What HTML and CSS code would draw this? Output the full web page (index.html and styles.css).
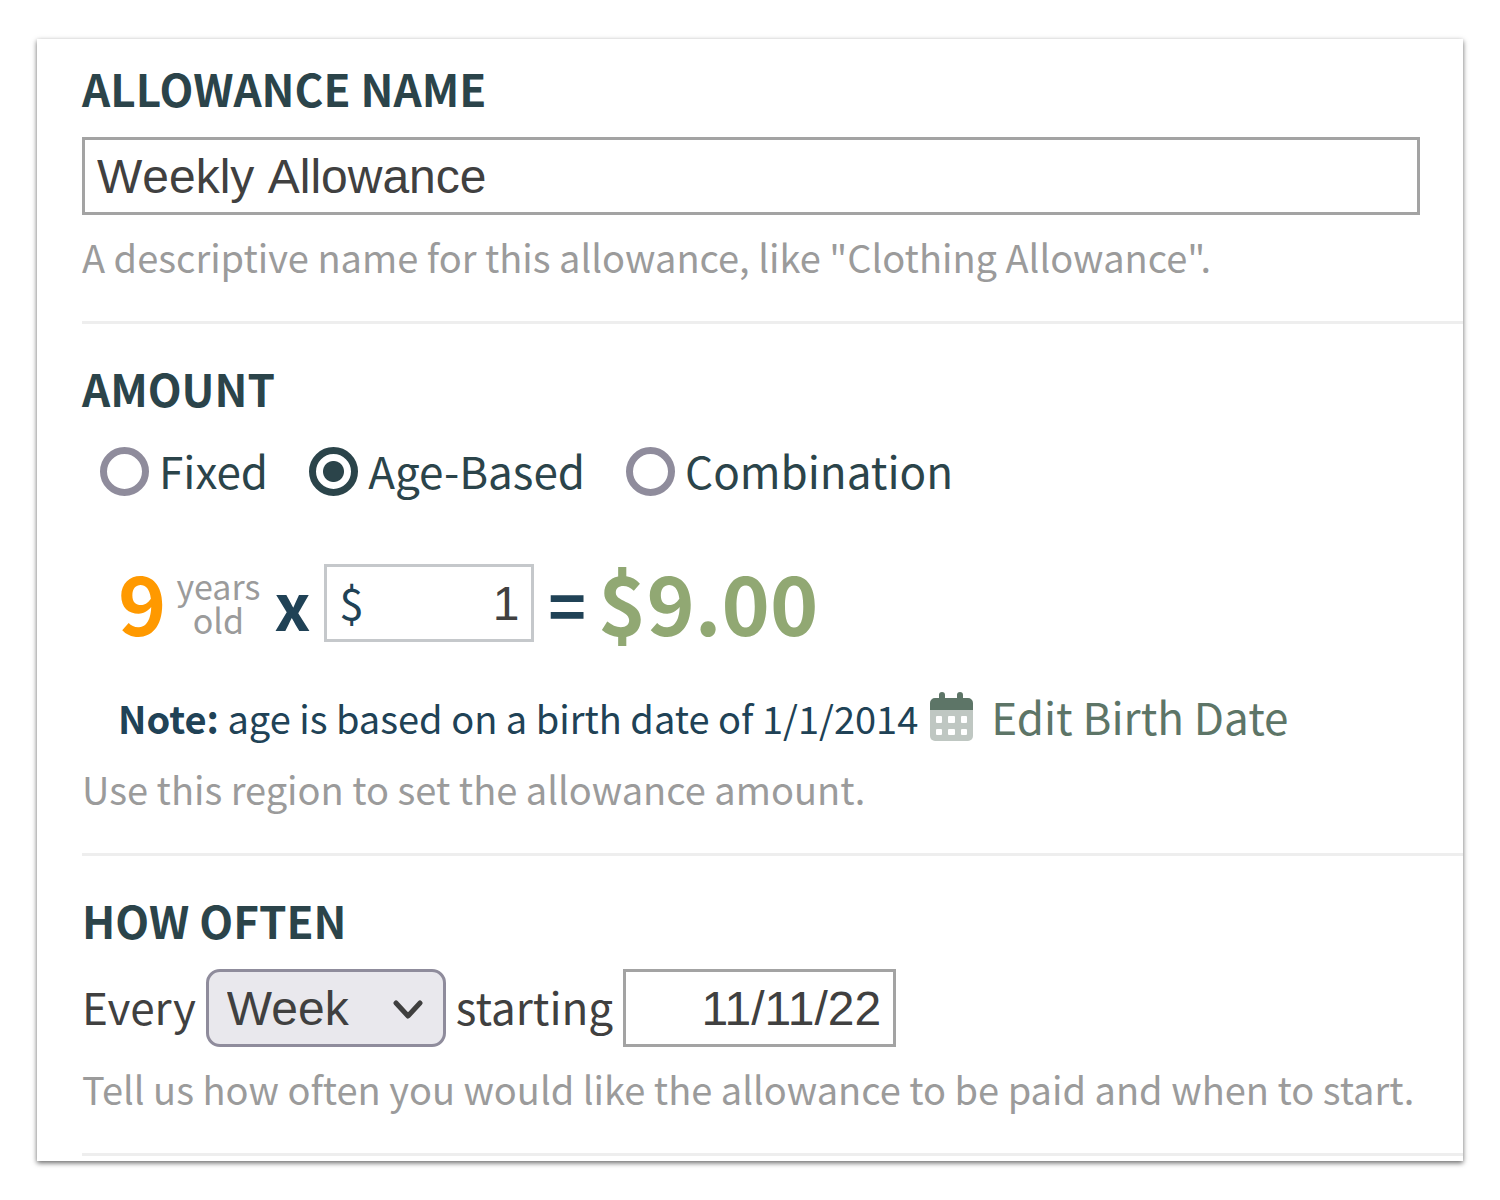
FILE: index.html
```
<!DOCTYPE html>
<html lang="en">
<head>
    <meta charset="UTF-8">
    <meta name="viewport" content="width=device-width, initial-scale=1.0">
    <title>Edit Allowance</title>
    <link rel="stylesheet" href="styles.css">
</head>
<body>
<form class="sheet">
    <section class="region">
        <h2><label for="allowanceName">ALLOWANCE NAME</label></h2>
        <input class="box name-box" type="text" id="allowanceName" value="Weekly Allowance">
        <p class="hint">A descriptive name for this allowance, like "Clothing Allowance".</p>
    </section>

    <section class="region">
        <h2>AMOUNT</h2>
        <div class="radio-row">
            <label class="radio"><input type="radio" name="amountType" value="fixed">Fixed</label>
            <label class="radio"><input type="radio" name="amountType" value="age" checked>Age-Based</label>
            <label class="radio"><input type="radio" name="amountType" value="combo">Combination</label>
        </div>
        <div class="formula">
            <span class="age">9</span>
            <span class="years">years<br>old</span>
            <span class="operator">x</span>
            <div class="money">
                <label for="perYear">$</label>
                <input type="text" id="perYear" value="1">
            </div>
            <span class="operator">=</span>
            <span class="total">$9.00</span>
        </div>
        <div class="note">
            <span class="note-text"><b>Note:</b> age is based on a birth date of 1/1/2014</span>
            <a href="#">
                <svg class="calendar" viewBox="0 0 43 49" aria-hidden="true">
                    <path fill="#bfc7c2" d="M0 18h43v26a5 5 0 0 1-5 5H5a5 5 0 0 1-5-5z"/>
                    <path fill="#5d7567" d="M0 18v-7a5 5 0 0 1 5-5h4V3a3 3 0 0 1 6 0v3h12V3a3 3 0 0 1 6 0v3h5a5 5 0 0 1 5 5v7z"/>
                    <g fill="#fff">
                        <rect x="6" y="24" width="6" height="7" rx="1"/>
                        <rect x="18" y="24" width="7" height="7" rx="1"/>
                        <rect x="31" y="24" width="6" height="7" rx="1"/>
                        <rect x="6" y="37" width="6" height="6" rx="1"/>
                        <rect x="18" y="37" width="7" height="6" rx="1"/>
                        <rect x="31" y="37" width="6" height="6" rx="1"/>
                    </g>
                </svg>
                Edit Birth Date
            </a>
        </div>
        <p class="hint">Use this region to set the allowance amount.</p>
    </section>

    <section class="region">
        <h2>HOW OFTEN</h2>
        <div class="schedule">
            <label for="period">Every</label>
            <div class="select-wrap">
                <select id="period">
                    <option>Day</option>
                    <option selected>Week</option>
                    <option>Month</option>
                </select>
                <svg class="chevron" viewBox="0 0 30 20" aria-hidden="true">
                    <path d="M3 3l12 13L27 3" fill="none" stroke="#3f3f3f" stroke-width="5" stroke-linecap="round" stroke-linejoin="round"/>
                </svg>
            </div>
            <label for="startDate">starting</label>
            <input class="box date-box" type="text" id="startDate" value="11/11/22">
        </div>
        <p class="hint">Tell us how often you would like the allowance to be paid and when to start.</p>
    </section>
</form>
</body>
</html>
```
FILE: styles.css
```
:root {
    --heading-color: #2b444a;
    --navy: #204256;
    --text-color: #404040;
    --hint-color: #9b9b9b;
    --link-color: #5d7567;
    --purple-gray: #8f8c9c;
}

* {
    box-sizing: border-box;
}

body {
    margin: 0;
    padding: 39px 37px;
    background: #fff;
    color: var(--text-color);
    font-family: "Noto Sans CJK SC", sans-serif;
    font-size: 44px;
    line-height: 52px;
}

.sheet {
    padding: 0 0 5px 45px;
    background: #fff;
    box-shadow: 0 2px 5px rgba(0, 0, 0, 0.6);
}

.region {
    padding: 38px 0;
    border-bottom: 3px solid #eee;
}

.region:first-child {
    padding-top: 23px;
}

h2 {
    margin: 0;
    font-size: 44px;
    color: var(--heading-color);
}

.hint {
    margin: 16px 0 0;
    font-size: 38px;
    color: var(--hint-color);
}

input, select {
    font-family: "Liberation Sans", Arial, sans-serif;
    font-size: 48px;
    color: var(--text-color);
}

.box {
    height: 78px;
    padding: 0 12px;
    border: 3px solid #a3a3a3;
    background: #fff;
}

.name-box {
    display: block;
    width: calc(100% - 43px);
    margin-top: 23px;
    font-kerning: none;
}

.radio-row {
    display: flex;
    gap: 41px;
    padding: 33px 18px 0;
    line-height: 46px;
    color: var(--heading-color);
}

.radio {
    display: flex;
    gap: 10px;
}

.radio input {
    appearance: none;
    width: 49px;
    height: 49px;
    margin: 0;
    border: 7px solid var(--purple-gray);
    border-radius: 50%;
}

.radio input:checked {
    border-color: var(--heading-color);
    background: radial-gradient(circle, var(--heading-color) 10px, #fff 11px);
}

.formula {
    display: flex;
    align-items: center;
    margin-top: 63px;
    padding-left: 36px;
    color: var(--navy);
    font-weight: bold;
}

.age, .total {
    padding-bottom: 4px;
    font-size: 82px;
    line-height: 84px;
}

.age {
    color: #ff9900;
}

.years {
    margin: 0 14px 0 10px;
    font-size: 34px;
    font-weight: normal;
    line-height: 34px;
    text-align: center;
    color: var(--hint-color);
}

.operator {
    font-size: 64px;
}

.money {
    display: flex;
    align-items: center;
    width: 210px;
    height: 78px;
    margin: 0 14px;
    padding: 0 12px;
    border: 3px solid #c5c8cb;
    font-weight: normal;
}

.money label {
    padding-bottom: 4px;
}

.money input {
    width: 100%;
    padding: 0;
    border: 0;
    background: none;
    text-align: right;
}

.total {
    margin-left: 12px;
    color: #91a873;
}

.note {
    display: flex;
    align-items: center;
    gap: 12px;
    margin-top: 43px;
    padding: 0 0 5px 36px;
    color: var(--navy);
}

.note-text {
    padding-top: 4px;
    font-size: 38px;
    line-height: 48px;
}

.note a {
    display: flex;
    align-items: center;
    gap: 18px;
    color: var(--link-color);
    text-decoration: none;
}

.calendar {
    width: 43px;
    height: 49px;
}

.schedule {
    display: flex;
    align-items: center;
    gap: 10px;
    margin-top: 23px;
}

.schedule label {
    padding-bottom: 4px;
}

.select-wrap {
    position: relative;
}

.select-wrap select {
    appearance: none;
    display: block;
    width: 240px;
    height: 78px;
    padding: 0 18px;
    border: 3px solid var(--purple-gray);
    border-radius: 14px;
    background: #e9e8ed;
}

.chevron {
    position: absolute;
    right: 23px;
    top: 31px;
    width: 30px;
    height: 20px;
    pointer-events: none;
}

.date-box {
    width: 273px;
    text-align: right;
}
```
